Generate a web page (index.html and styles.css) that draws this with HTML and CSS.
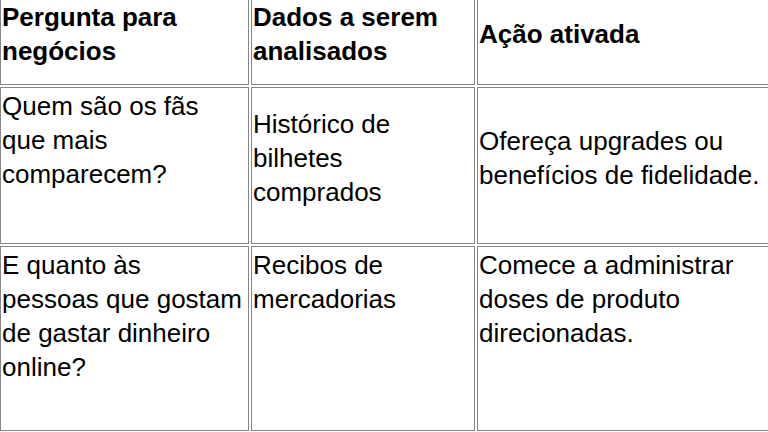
FILE: index.html
```html
<!DOCTYPE html>
<html lang="pt">
<head>
<meta charset="utf-8">
<title>Tabela</title>
<link rel="stylesheet" href="styles.css">
</head>
<body>
<table class="grid">
  <colgroup>
    <col class="c1">
    <col class="c2">
    <col class="c3">
  </colgroup>
  <tr class="head">
    <th>Pergunta para<br>negócios</th>
    <th>Dados a serem<br>analisados</th>
    <th>Ação ativada</th>
  </tr>
  <tr class="mid">
    <td class="top">Quem são os fãs<br>que mais<br>comparecem?</td>
    <td>Histórico de<br>bilhetes<br>comprados</td>
    <td>Ofereça upgrades ou<br>benefícios de fidelidade.</td>
  </tr>
  <tr class="last">
    <td>E quanto às<br>pessoas que gostam<br>de gastar dinheiro<br>online?</td>
    <td>Recibos de<br>mercadorias</td>
    <td>Comece a administrar<br>doses de produto<br>direcionadas.</td>
  </tr>
</table>
</body>
</html>
```
FILE: styles.css
```css
html, body {
  margin: 0;
  padding: 0;
  overflow: hidden;
  background: #ffffff;
}

.grid {
  table-layout: fixed;
  border-collapse: separate;
  border-spacing: 2px;
  width: 781px;
  margin: -4px 0 0 -2px;
  font-family: "Liberation Sans", Arial, sans-serif;
  font-size: 26px;
  line-height: 34px;
  color: #000;
}

.c1 { width: 249px; }
.c2 { width: 224px; }
.c3 { width: 300px; }

.grid th,
.grid td {
  box-sizing: border-box;
  border: 1px solid #858585;
  padding: 1px 1px 16px 1px;
  text-align: left;
  white-space: nowrap;
  vertical-align: middle;
}

.grid th {
  font-weight: bold;
}

.mid td {
  height: 157px;
}

.mid td.top {
  vertical-align: top;
}

.last td {
  height: 185px;
  vertical-align: top;
}
```
